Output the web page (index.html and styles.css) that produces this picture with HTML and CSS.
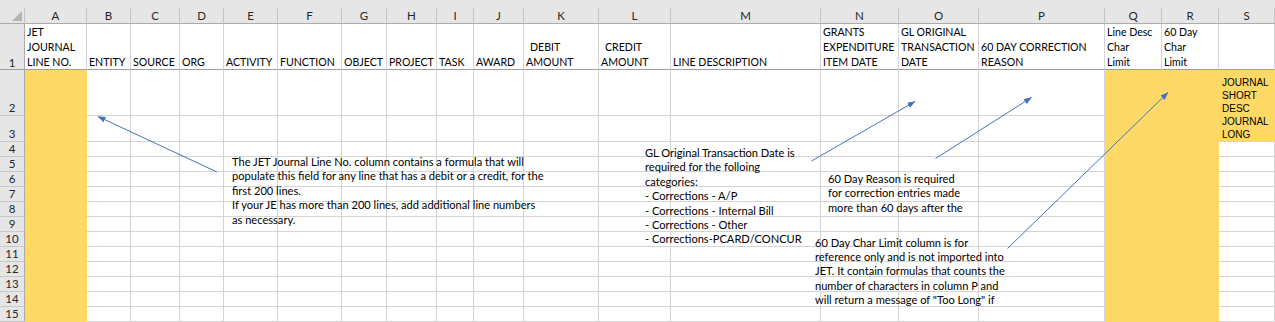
FILE: index.html
```html
<!DOCTYPE html>
<html>
<head>
<meta charset="utf-8">
<link rel="stylesheet" href="styles.css">
</head>
<body>
<div class="sheet">
  <div class="grid">
    <div class="strip"></div>
    <div class="corner"><span class="tri"></span></div><div class="ch">A</div><div class="ch">B</div><div class="ch">C</div><div class="ch">D</div><div class="ch">E</div><div class="ch">F</div><div class="ch">G</div><div class="ch">H</div><div class="ch">I</div><div class="ch">J</div><div class="ch">K</div><div class="ch">L</div><div class="ch">M</div><div class="ch">N</div><div class="ch">O</div><div class="ch">P</div><div class="ch">Q</div><div class="ch">R</div><div class="ch">S</div>

    <div class="rh r1">1</div><div class="c h"><div>JET<br>JOURNAL<br>LINE NO.</div></div><div class="c h"><div>ENTITY</div></div><div class="c h"><div>SOURCE</div></div><div class="c h"><div>ORG</div></div><div class="c h"><div>ACTIVITY</div></div><div class="c h"><div>FUNCTION</div></div><div class="c h"><div>OBJECT</div></div><div class="c h"><div>PROJECT</div></div><div class="c h"><div>TASK</div></div><div class="c h"><div>AWARD</div></div><div class="c h"><div><span class="sp">DEBIT</span><br>AMOUNT</div></div><div class="c h"><div><span class="sp">CREDIT</span><br>AMOUNT</div></div><div class="c h"><div>LINE DESCRIPTION</div></div><div class="c h"><div>GRANTS<br>EXPENDITURE<br>ITEM DATE</div></div><div class="c h"><div>GL ORIGINAL<br>TRANSACTION<br>DATE</div></div><div class="c h"><div>60 DAY CORRECTION<br>REASON</div></div><div class="c h"><div>Line Desc<br>Char<br>Limit</div></div><div class="c h"><div>60 Day<br>Char<br>Limit</div></div><div class="c h"></div>

    <div class="rh">2</div><div class="c y"></div><div class="c"></div><div class="c"></div><div class="c"></div><div class="c"></div><div class="c"></div><div class="c"></div><div class="c"></div><div class="c"></div><div class="c"></div><div class="c"></div><div class="c"></div><div class="c"></div><div class="c"></div><div class="c"></div><div class="c"></div><div class="c y"></div><div class="c y"></div><div class="c y merged"><div class="note">JOURNAL<br>SHORT<br>DESC<br>JOURNAL<br>LONG</div></div>

    <div class="rh">3</div><div class="c y"></div><div class="c"></div><div class="c"></div><div class="c"></div><div class="c"></div><div class="c"></div><div class="c"></div><div class="c"></div><div class="c"></div><div class="c"></div><div class="c"></div><div class="c"></div><div class="c"></div><div class="c"></div><div class="c"></div><div class="c"></div><div class="c y"></div><div class="c y"></div>

    <div class="rh">4</div><div class="c y"></div><div class="c"></div><div class="c"></div><div class="c"></div><div class="c"></div><div class="c"></div><div class="c"></div><div class="c"></div><div class="c"></div><div class="c"></div><div class="c"></div><div class="c"></div><div class="c"></div><div class="c"></div><div class="c"></div><div class="c"></div><div class="c y"></div><div class="c y"></div><div class="c"></div>

    <div class="rh">5</div><div class="c y"></div><div class="c"></div><div class="c"></div><div class="c"></div><div class="c"></div><div class="c"></div><div class="c"></div><div class="c"></div><div class="c"></div><div class="c"></div><div class="c"></div><div class="c"></div><div class="c"></div><div class="c"></div><div class="c"></div><div class="c"></div><div class="c y"></div><div class="c y"></div><div class="c"></div>

    <div class="rh">6</div><div class="c y"></div><div class="c"></div><div class="c"></div><div class="c"></div><div class="c"></div><div class="c"></div><div class="c"></div><div class="c"></div><div class="c"></div><div class="c"></div><div class="c"></div><div class="c"></div><div class="c"></div><div class="c"></div><div class="c"></div><div class="c"></div><div class="c y"></div><div class="c y"></div><div class="c"></div>

    <div class="rh">7</div><div class="c y"></div><div class="c"></div><div class="c"></div><div class="c"></div><div class="c"></div><div class="c"></div><div class="c"></div><div class="c"></div><div class="c"></div><div class="c"></div><div class="c"></div><div class="c"></div><div class="c"></div><div class="c"></div><div class="c"></div><div class="c"></div><div class="c y"></div><div class="c y"></div><div class="c"></div>

    <div class="rh">8</div><div class="c y"></div><div class="c"></div><div class="c"></div><div class="c"></div><div class="c"></div><div class="c"></div><div class="c"></div><div class="c"></div><div class="c"></div><div class="c"></div><div class="c"></div><div class="c"></div><div class="c"></div><div class="c"></div><div class="c"></div><div class="c"></div><div class="c y"></div><div class="c y"></div><div class="c"></div>

    <div class="rh">9</div><div class="c y"></div><div class="c"></div><div class="c"></div><div class="c"></div><div class="c"></div><div class="c"></div><div class="c"></div><div class="c"></div><div class="c"></div><div class="c"></div><div class="c"></div><div class="c"></div><div class="c"></div><div class="c"></div><div class="c"></div><div class="c"></div><div class="c y"></div><div class="c y"></div><div class="c"></div>

    <div class="rh">10</div><div class="c y"></div><div class="c"></div><div class="c"></div><div class="c"></div><div class="c"></div><div class="c"></div><div class="c"></div><div class="c"></div><div class="c"></div><div class="c"></div><div class="c"></div><div class="c"></div><div class="c"></div><div class="c"></div><div class="c"></div><div class="c"></div><div class="c y"></div><div class="c y"></div><div class="c"></div>

    <div class="rh">11</div><div class="c y"></div><div class="c"></div><div class="c"></div><div class="c"></div><div class="c"></div><div class="c"></div><div class="c"></div><div class="c"></div><div class="c"></div><div class="c"></div><div class="c"></div><div class="c"></div><div class="c"></div><div class="c"></div><div class="c"></div><div class="c"></div><div class="c y"></div><div class="c y"></div><div class="c"></div>

    <div class="rh">12</div><div class="c y"></div><div class="c"></div><div class="c"></div><div class="c"></div><div class="c"></div><div class="c"></div><div class="c"></div><div class="c"></div><div class="c"></div><div class="c"></div><div class="c"></div><div class="c"></div><div class="c"></div><div class="c"></div><div class="c"></div><div class="c"></div><div class="c y"></div><div class="c y"></div><div class="c"></div>

    <div class="rh">13</div><div class="c y"></div><div class="c"></div><div class="c"></div><div class="c"></div><div class="c"></div><div class="c"></div><div class="c"></div><div class="c"></div><div class="c"></div><div class="c"></div><div class="c"></div><div class="c"></div><div class="c"></div><div class="c"></div><div class="c"></div><div class="c"></div><div class="c y"></div><div class="c y"></div><div class="c"></div>

    <div class="rh">14</div><div class="c y"></div><div class="c"></div><div class="c"></div><div class="c"></div><div class="c"></div><div class="c"></div><div class="c"></div><div class="c"></div><div class="c"></div><div class="c"></div><div class="c"></div><div class="c"></div><div class="c"></div><div class="c"></div><div class="c"></div><div class="c"></div><div class="c y"></div><div class="c y"></div><div class="c"></div>

    <div class="rh">15</div><div class="c y"></div><div class="c"></div><div class="c"></div><div class="c"></div><div class="c"></div><div class="c"></div><div class="c"></div><div class="c"></div><div class="c"></div><div class="c"></div><div class="c"></div><div class="c"></div><div class="c"></div><div class="c"></div><div class="c"></div><div class="c"></div><div class="c y"></div><div class="c y"></div><div class="c"></div>
  </div>

  <div class="tbox tb1">The JET Journal Line No. column contains a formula that will<br>populate this field for any line that has a debit or a credit, for the<br>first 200 lines.<br>If your JE has more than 200 lines, add additional line numbers<br>as necessary.</div>
  <div class="tbox tb2">GL Original Transaction Date is<br>required for the folloing<br>categories:<br>- Corrections - A/P<br>- Corrections - Internal Bill<br>- Corrections - Other<br>- Corrections-PCARD/CONCUR</div>
  <div class="tbox tb3">60 Day Reason is required<br>for correction entries made<br>more than 60 days after the</div>
  <div class="tbox tb4">60 Day Char Limit column is for<br>reference only and is not imported into<br>JET. It contain formulas that counts the<br>number of characters in column P and<br>will return a message of "Too Long" if</div>

  <svg class="arrows" width="1275" height="322" viewBox="0 0 1275 322">
    <defs>
      <marker id="ah" markerWidth="8" markerHeight="6" refX="7.5" refY="3" orient="auto" markerUnits="userSpaceOnUse">
        <path d="M0,0 L8,3 L0,6 Z" fill="#4472C4"/>
      </marker>
    </defs>
    <line x1="217" y1="172" x2="98" y2="116.5" stroke="#4472C4" stroke-width="1" marker-end="url(#ah)"/>
    <line x1="811.5" y1="161" x2="915" y2="101.5" stroke="#4472C4" stroke-width="1" marker-end="url(#ah)"/>
    <line x1="935.5" y1="158.5" x2="1031.5" y2="97.5" stroke="#4472C4" stroke-width="1" marker-end="url(#ah)"/>
    <line x1="1007.5" y1="248.5" x2="1168" y2="92.5" stroke="#4472C4" stroke-width="1" marker-end="url(#ah)"/>
  </svg>
</div>
</body>
</html>
```

FILE: styles.css
```css
html, body {
  margin: 0;
  padding: 0;
  background: #ffffff;
}

.sheet {
  position: relative;
  width: 1275px;
  height: 322px;
  overflow: hidden;
  font-family: Lato, "Liberation Sans", sans-serif;
  color: #000;
}

.grid {
  display: grid;
  grid-template-columns: 25px 62px 44px 49px 44px 54px 64px 45px 50px 37px 50px 75px 72px 150px 78px 80px 126px 57px 57px 1fr;
  grid-template-rows: 8px 16px 46px 46px 26px repeat(12, 15px);
}

.strip {
  grid-column: 1 / -1;
  background: #e6e6e6;
}

.corner {
  background: #e6e6e6;
  border-right: 1px solid #c4c4c4;
  border-bottom: 1px solid #ababab;
  box-sizing: border-box;
  position: relative;
}

.tri {
  position: absolute;
  right: 2px;
  bottom: 2px;
  width: 0;
  height: 0;
  border-left: 10px solid transparent;
  border-bottom: 10px solid #b4b4b4;
}

.ch {
  background: #e6e6e6;
  border-right: 1px solid #c4c4c4;
  border-bottom: 1px solid #ababab;
  box-sizing: border-box;
  font-size: 11.5px;
  line-height: 15px;
  text-align: center;
  color: #262626;
}

.rh {
  background: #e6e6e6;
  border-right: 1px solid #ababab;
  border-bottom: 1px solid #c8c8c8;
  box-sizing: border-box;
  font-size: 11.5px;
  line-height: 14px;
  color: #262626;
  display: flex;
  align-items: flex-end;
  justify-content: center;
}

.c {
  border-right: 1px solid #d4d4d4;
  border-bottom: 1px solid #d4d4d4;
  box-sizing: border-box;
  background: #fff;
}

.h {
  border-bottom-color: #9e9e9e;
  font-size: 10.6px;
  line-height: 15px;
  padding: 0 0 0 2px;
  display: flex;
  flex-direction: column;
  justify-content: flex-end;
  white-space: nowrap;
  overflow: hidden;
}

.h > div {
  margin-bottom: -1px;
}

.rh.r1 {
  border-bottom-color: #9e9e9e;
  padding-bottom: 0;
  line-height: 12px;
}

.sp {
  padding-left: 4px;
}

.y {
  background: #ffd966;
  border-color: #ffd966;
}

.merged {
  grid-row: span 2;
}

.note {
  font-family: "Liberation Sans", Arial, sans-serif;
  font-size: 10px;
  line-height: 13px;
  padding: 6px 0 0 3px;
}

.tbox {
  position: absolute;
  font-size: 11.1px;
  line-height: 14.4px;
  white-space: nowrap;
}

.tb1 { left: 232px; top: 155px; }
.tb2 { left: 645px; top: 146px; }
.tb3 { left: 828px; top: 172px; }
.tb4 { left: 815px; top: 235.5px; }

.arrows {
  position: absolute;
  left: 0;
  top: 0;
  pointer-events: none;
}
```
